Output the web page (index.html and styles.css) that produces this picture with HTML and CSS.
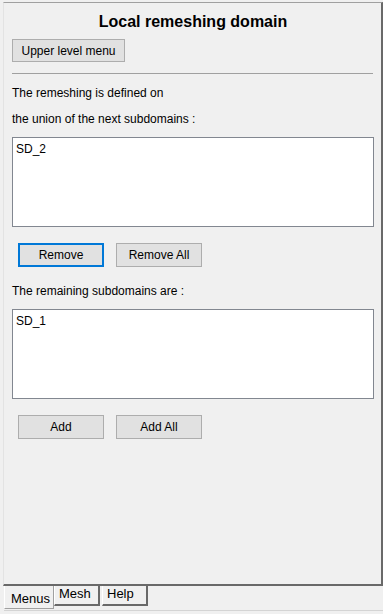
FILE: index.html
```html
<!DOCTYPE html>
<html lang="en">
	<head>
		<meta charset="UTF-8" />
		<meta name="viewport" content="width=device-width, initial-scale=1.0" />
		<title>Local remeshing domain</title>
		<link rel="stylesheet" href="styles.css">
	</head>
	<body>
		<div class="window">
			<div class="panel">
				<h1>Local remeshing domain</h1>
				<button class="btn wide">Upper level menu</button>
				<hr class="sep" />

				<p class="label">The remeshing is defined on</p>
				<p class="label second">the union of the next subdomains :</p>
				<div class="listbox">
					<div class="item">SD_2</div>
				</div>
				<div class="button-row">
					<button class="btn focused">Remove</button>
					<button class="btn">Remove All</button>
				</div>

				<p class="label remaining">The remaining subdomains are :</p>
				<div class="listbox">
					<div class="item">SD_1</div>
				</div>
				<div class="button-row">
					<button class="btn">Add</button>
					<button class="btn">Add All</button>
				</div>
			</div>

			<div class="tabs">
				<div class="tab active">Menus</div>
				<div class="tab">Mesh</div>
				<div class="tab">Help</div>
			</div>
		</div>
	</body>
</html>
```

FILE: styles.css
```css
html,
body {
	margin: 0;
	padding: 0;
	background-color: #f0f0f0;
	font-family: "Liberation Sans", Arial, sans-serif;
	font-size: 12px;
	color: #000;
}
.window {
	width: 383px;
	height: 614px;
	display: flex;
	flex-direction: column;
	box-sizing: border-box;
	padding-top: 2px;
}
.panel {
	margin-left: 3px;
	height: 584px;
	box-sizing: border-box;
	border-top: 1px solid #a0a0a0;
	border-left: 1px solid #e3e3e3;
	border-right: 2px solid #696969;
	border-bottom: 2px solid #696969;
	padding: 0 7px 0 8px;
}
h1 {
	margin: 9px 0 0 0;
	font-size: 16px;
	line-height: 20px;
	text-align: center;
	font-weight: bold;
}
.btn {
	font-family: "Liberation Sans", Arial, sans-serif;
	font-size: 12px;
	color: #000;
	background-color: #e1e1e1;
	border: 1px solid #adadad;
	border-radius: 0;
	height: 24px;
	width: 86px;
	padding: 0;
	box-sizing: border-box;
}
.btn.wide {
	display: block;
	width: 113px;
	height: 23px;
	margin-top: 7px;
}
.btn.focused {
	border: 2px solid #0078d7;
}
.sep {
	margin: 11px 1px 0 0;
	border: none;
	border-top: 1px solid #a0a0a0;
	height: 0;
}
.label {
	margin: 9px 0 0 0;
	line-height: 20px;
}
.label.second {
	margin-top: 6px;
}
.label.remaining {
	margin-top: 14px;
}
.listbox {
	margin-top: 8px;
	height: 90px;
	box-sizing: border-box;
	background-color: #fff;
	border: 1px solid #828790;
	padding: 3px 3px;
}
.item {
	line-height: 16px;
}
.button-row {
	display: flex;
	gap: 12px;
	margin-top: 16px;
	padding-left: 6px;
}
.tabs {
	display: flex;
	height: 25px;
	margin-left: 4px;
	border-bottom: 1px solid #d4d4d4;
	box-sizing: border-box;
}
.tab {
	width: 46px;
	height: 20px;
	box-sizing: border-box;
	border-left: 1px solid #fff;
	border-right: 2px solid #696969;
	border-bottom: 2px solid #696969;
	padding-left: 4px;
	line-height: 16px;
	margin-right: 2px;
	font-size: 13px;
}
.tab.active {
	width: 50px;
	height: 23px;
	margin-right: 0;
	border-right: 1px solid #a0a0a0;
	border-bottom: 1px solid #a0a0a0;
	padding-left: 6px;
	padding-top: 5px;
}
```
